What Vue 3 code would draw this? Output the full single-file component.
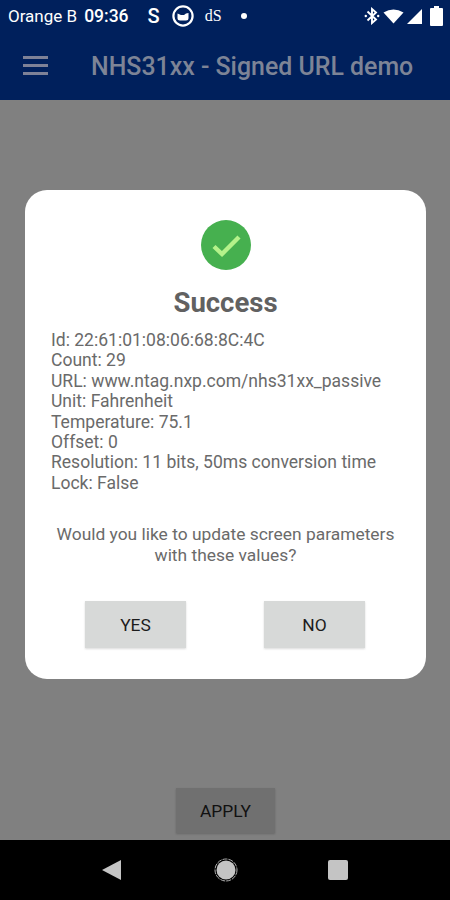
<script setup>
const details = [
  "Id: 22:61:01:08:06:68:8C:4C",
  "Count: 29",
  "URL: www.ntag.nxp.com/nhs31xx_passive",
  "Unit: Fahrenheit",
  "Temperature: 75.1",
  "Offset: 0",
  "Resolution: 11 bits, 50ms conversion time",
  "Lock: False",
];
</script>

<template>
  <div class="screen">
    <div class="status-bar">
      <div class="status-left">
        <span class="carrier">Orange B</span>
        <span class="clock">09:36</span>
        <span class="app-s">S</span>
        <svg class="app-circle" width="24" height="24" viewBox="0 0 24 24">
          <circle cx="12" cy="12" r="9.6" fill="none" stroke="#fff" stroke-width="2.2" />
          <path d="M6.5 9.5 L10 11 L13 11 L15 9.5 L17.5 9 V14 Q17.5 16.5 15 16.5 H9 Q6.5 16.5 6.5 14 Z" fill="#fff" />
        </svg>
        <span class="app-ds">dS</span>
        <span class="dot"></span>
      </div>
      <div class="status-right">
        <svg width="16" height="18" viewBox="0 0 16 18">
          <path d="M3.5 4.5 L12 12.5 L8 16 V2 L12 5.5 L3.5 13.5" fill="none" stroke="#fff" stroke-width="1.9" />
          <circle cx="1.8" cy="9" r="1.2" fill="#fff" />
          <circle cx="14.2" cy="9" r="1.2" fill="#fff" />
        </svg>
        <svg width="21" height="15" viewBox="0 0 21 15">
          <path d="M0.5 3.5 Q10.5 -2.5 20.5 3.5 L10.5 14.5 Z" fill="#fff" />
        </svg>
        <svg width="15" height="15" viewBox="0 0 15 15">
          <path d="M15 0 V15 H0 Z" fill="#fff" />
        </svg>
        <svg class="battery" width="13" height="20" viewBox="0 0 13 20">
          <path d="M4 0 H9 V2 H12 Q13 2 13 3 V19 Q13 20 12 20 H1 Q0 20 0 19 V3 Q0 2 1 2 H4 Z" fill="#fff" />
        </svg>
      </div>
    </div>

    <header class="app-bar">
      <div class="menu-icon">
        <span></span>
        <span></span>
        <span></span>
      </div>
      <h1 class="title">NHS31xx - Signed URL demo</h1>
    </header>

    <main class="content">
      <button class="apply">APPLY</button>
    </main>

    <nav class="nav-bar">
      <svg width="20" height="22" viewBox="0 0 20 22">
        <path d="M19 1 V21 L0 11 Z" fill="#c4c4c4" />
      </svg>
      <svg class="home" width="24" height="24" viewBox="0 0 24 24">
        <circle cx="12" cy="12" r="9.5" fill="#c4c4c4" />
        <circle cx="12" cy="12" r="11" fill="none" stroke="#b0b0b0" stroke-width="1" stroke-dasharray="5 1" />
      </svg>
      <div class="square"></div>
    </nav>

    <div class="dialog">
      <svg class="check" width="50" height="50" viewBox="0 0 50 50">
        <circle cx="25" cy="25" r="25" fill="#46b04f" />
        <path d="M13 26.5 L21 34 L38 17" fill="none" stroke="#b4f28a" stroke-width="4.4" />
      </svg>
      <h2 class="dialog-title">Success</h2>
      <div class="details">
        <div v-for="line in details" :key="line">{{ line }}</div>
      </div>
      <p class="question">Would you like to update screen parameters with these values?</p>
      <div class="actions">
        <button class="action">YES</button>
        <button class="action">NO</button>
      </div>
    </div>
  </div>
</template>

<style scoped>
.screen {
  position: relative;
  display: flex;
  flex-direction: column;
  width: 450px;
  height: 900px;
  overflow: hidden;
  background: #808080;
  font-family: Roboto, "Liberation Sans", sans-serif;
}

.status-bar {
  display: flex;
  justify-content: space-between;
  align-items: center;
  height: 32px;
  padding: 0 7px 0 8px;
  background: #00205c;
  color: #fff;
}

.status-left,
.status-right {
  display: flex;
  align-items: center;
}

.status-right {
  gap: 3px;
}

.carrier {
  font-size: 17px;
  margin-right: 7px;
}

.clock {
  font-size: 17.5px;
  font-weight: 500;
  margin-right: 19px;
}

.app-s {
  font-size: 20px;
  font-weight: 500;
  margin-right: 11px;
}

.app-circle {
  margin-right: 10px;
}

.app-ds {
  font-family: "Liberation Serif", serif;
  font-size: 16px;
  margin-right: 19px;
}

.dot {
  width: 6px;
  height: 6px;
  border-radius: 50%;
  background: #fff;
}

.battery {
  margin-left: 5px;
}

.app-bar {
  display: flex;
  align-items: center;
  height: 68px;
  padding: 0 0 1px 23px;
  background: #00205c;
  box-sizing: border-box;
}

.menu-icon {
  display: flex;
  flex-direction: column;
  gap: 5.5px;
  width: 25px;
  margin-right: 43px;
}

.menu-icon span {
  height: 2.5px;
  background: #7d8197;
}

.title {
  margin: 2px 0 0;
  font-size: 24.9px;
  font-weight: 500;
  color: #7d8496;
  white-space: nowrap;
}

.content {
  flex: 1;
  display: flex;
  justify-content: center;
  align-items: flex-end;
  padding-bottom: 7px;
}

.apply {
  width: 99px;
  height: 45px;
  margin-left: 1px;
  border: none;
  background: #707070;
  box-shadow: 0 1px 2px rgba(0, 0, 0, 0.2);
  color: #111;
  font-family: inherit;
  font-size: 17.4px;
}

.nav-bar {
  display: flex;
  justify-content: center;
  align-items: center;
  gap: 90px;
  height: 60px;
  background: #000;
}

.home {
  margin: 0 0.5px 0 1.5px;
}

.square {
  width: 20px;
  height: 20px;
  border-radius: 2px;
  background: #c4c4c4;
}

.dialog {
  position: absolute;
  top: 190px;
  left: 25px;
  width: 401px;
  height: 489px;
  box-sizing: border-box;
  display: flex;
  flex-direction: column;
  padding: 30px 26px 0;
  border-radius: 22px;
  background: #fff;
  color: #6a6a6a;
}

.check {
  align-self: center;
}

.dialog-title {
  margin: 17px 0 0;
  font-size: 27.5px;
  font-weight: 700;
  line-height: 32px;
  text-align: center;
  color: #616161;
}

.details {
  margin-top: 11px;
  font-size: 17.55px;
  line-height: 20.4px;
}

.question {
  margin: 31px 0 0;
  font-size: 17.4px;
  line-height: 21px;
  text-align: center;
}

.actions {
  display: flex;
  justify-content: space-between;
  margin-top: 35px;
  padding: 0 35px 0 34px;
}

.action {
  width: 101px;
  height: 47px;
  border: none;
  background: #d7d9d8;
  box-shadow: 0 1px 2px rgba(0, 0, 0, 0.15);
  color: #1c1c1c;
  font-family: inherit;
  font-size: 17.4px;
}
</style>
